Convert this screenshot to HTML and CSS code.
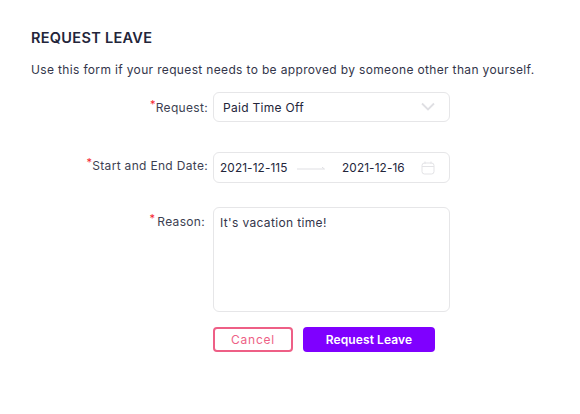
FILE: index.html
```html
<!DOCTYPE html>
<html lang="en">
<head>
    <meta charset="UTF-8">
    <meta name="viewport" content="width=device-width, initial-scale=1.0">
    <title>Request Leave</title>
    <link rel="stylesheet" href="styles.css">
</head>
<body>
    <div class="container">
        <h2>REQUEST LEAVE</h2>
        <p class="intro">Use this form if your request needs to be approved by someone other than yourself.</p>
        <form id="leaveForm">
            <div class="form-row row-request">
                <label class="required">Request:</label>
                <div class="field select-field">
                    <span class="select-value">Paid Time Off</span>
                    <svg class="chevron" width="16" height="10" viewBox="0 0 16 10" fill="none"><path d="M2 1.5L8 7.5L14 1.5" stroke="#dfdfe3" stroke-width="1.8"/></svg>
                </div>
            </div>
            <div class="form-row row-date">
                <label class="required date-label">Start and End Date:</label>
                <div class="field date-field">
                    <span class="date-start">2021-12-115</span>
                    <svg class="arrow" width="28" height="4" viewBox="0 0 28 4" fill="none"><path d="M0 3H27.5L25 1.2" stroke="#dfdfe3" stroke-width="1"/></svg>
                    <span class="date-end">2021-12-16</span>
                    <svg class="calendar" width="14" height="14" viewBox="0 0 14 14" fill="none"><rect x="1" y="2" width="12" height="11" rx="2.5" stroke="#e3e3e6"/><path d="M1 5.5H13M4 0.5V3M10 0.5V3" stroke="#e3e3e6"/></svg>
                </div>
            </div>
            <div class="form-row row-reason">
                <label class="required reason-label">Reason:</label>
                <div class="field reason-field">It's vacation time!</div>
            </div>
            <div class="form-actions">
                <button type="button" class="btn-cancel">Cancel</button>
                <button type="submit" class="btn-submit">Request Leave</button>
            </div>
        </form>
    </div>
</body>
</html>
```

FILE: styles.css
```css
* {
    margin: 0;
    padding: 0;
    box-sizing: border-box;
    font-family: 'Inter', 'Liberation Sans', sans-serif;
}

body {
    background: white;
    color: #2b2d42;
}

.container {
    padding: 29px 31px 0;
}

h2 {
    font-size: 14.5px;
    line-height: 18px;
    font-weight: 600;
    letter-spacing: 0.3px;
    color: #23253a;
}

.intro {
    margin-top: 14px;
    font-size: 12px;
    line-height: 18px;
    letter-spacing: 0.345px;
    color: #33354a;
}

#leaveForm {
    margin-top: 13px;
}

.form-row {
    display: flex;
    gap: 5px;
}

.form-row label {
    width: 177px;
    text-align: right;
    font-size: 12px;
    line-height: 18px;
    letter-spacing: 0.32px;
    color: #3d3f52;
    padding-top: 7px;
}

.required::before {
    content: "*";
    color: #f5222d;
    font-size: 11px;
    position: relative;
    top: -4px;
}

.form-row .date-label {
    padding-top: 5px;
}

.form-row .reason-label {
    padding-top: 6px;
    padding-right: 3px;
}

.reason-label::before {
    margin-right: 2px;
}

.field {
    width: 237px;
    background: white;
    border: 1px solid #e6e6e8;
    border-radius: 6px;
    font-size: 12px;
    color: #23253a;
}

.select-field {
    height: 30px;
    display: flex;
    align-items: center;
    justify-content: space-between;
    padding: 0 13px 0 9px;
}

.select-value {
    letter-spacing: 0.3px;
    padding-top: 1px;
}

.chevron {
    margin-top: -1px;
}

.date-field {
    height: 31px;
    display: flex;
    align-items: center;
    padding: 0 14px 0 6px;
    font-size: 11.8px;
    letter-spacing: 0.12px;
}

.row-date {
    margin-top: 30px;
}

.row-reason {
    margin-top: 24px;
}

.date-start {
    width: 77px;
}

.date-end {
    margin-left: 17px;
    width: 66px;
}

.calendar {
    margin-left: auto;
}

.reason-field {
    height: 105px;
    padding: 6px 6px;
    line-height: 18px;
    letter-spacing: 0.35px;
    color: #33354a;
}

.form-actions {
    display: flex;
    gap: 10px;
    margin-top: 15px;
    margin-left: 182px;
}

button {
    height: 25px;
    border-radius: 4px;
    font-size: 12px;
    cursor: pointer;
}

.btn-cancel {
    width: 80px;
    background: white;
    border: 2px solid #ee5f86;
    color: #ee5f86;
    letter-spacing: 0.8px;
}

.btn-submit {
    width: 132px;
    background: #7f00ff;
    border: none;
    color: white;
    font-weight: 600;
    letter-spacing: 0.1px;
}
```
